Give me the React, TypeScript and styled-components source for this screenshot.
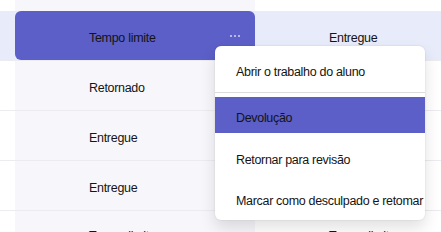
import React from "react";
import styled, { createGlobalStyle } from "styled-components";

const Global = createGlobalStyle`
  html, body { margin: 0; padding: 0; background: #ffffff; }
  body {
    width: 441px;
    height: 232px;
    overflow: hidden;
    font-family: "Liberation Sans", Arial, sans-serif;
  }
`;

const Page = styled.div`
  position: relative;
  width: 441px;
  height: 232px;
  overflow: hidden;
  background: #ffffff;
`;

const Table = styled.div`
  display: flex;
  flex-direction: column;
`;

const Row = styled.div<{ $h: number; $hover?: boolean; $line?: boolean }>`
  display: grid;
  grid-template-columns: 15px 240px 240px;
  height: ${(p) => p.$h}px;
  box-sizing: border-box;
  border-bottom: ${(p) => (p.$line ? "1px solid #ececf0" : "none")};
  background: ${(p) => (p.$hover ? "#e8ebfa" : "transparent")};
`;

type Tone = "plain" | "column" | "selected";

const Cell = styled.div<{ $tone: Tone; $pt?: number }>`
  display: flex;
  align-items: center;
  box-sizing: border-box;
  padding-top: ${(p) => p.$pt ?? 4}px;
  padding-left: 74px;
  font-size: 12.5px;
  letter-spacing: -0.3px;
  color: #141414;
  white-space: nowrap;
  background: ${(p) =>
    p.$tone === "selected" ? "#5b5fc7" : p.$tone === "column" ? "#f7f7fb" : "transparent"};
  border-radius: ${(p) => (p.$tone === "selected" ? "6px" : "0")};
`;

const Gutter = styled.div<{ $hover?: boolean }>`
  background: ${(p) => (p.$hover ? "#e8ebfa" : "#ffffff")};
`;

const MoreButton = styled.div`
  margin-left: auto;
  margin-right: 15px;
  margin-top: -4px;
  display: flex;
  gap: 2px;
  align-items: center;
`;

const Dot = styled.span`
  width: 2px;
  height: 2px;
  border-radius: 1px;
  background: #d3d5f4;
`;

const Menu = styled.div`
  position: absolute;
  left: 215px;
  top: 46px;
  width: 210px;
  height: 174px;
  box-sizing: border-box;
  background: #ffffff;
  border-radius: 6px;
  box-shadow: 0 0 2px rgba(0, 0, 0, 0.12), 0 8px 16px rgba(0, 0, 0, 0.12);
  display: flex;
  flex-direction: column;
  overflow: hidden;
`;

const MenuItem = styled.div<{ $h: number; $pt: number; $active?: boolean }>`
  display: flex;
  align-items: center;
  box-sizing: border-box;
  height: ${(p) => p.$h}px;
  padding-top: ${(p) => p.$pt}px;
  padding-left: 21px;
  font-size: 12.5px;
  letter-spacing: -0.32px;
  color: #141414;
  white-space: nowrap;
  background: ${(p) => (p.$active ? "#5b5fc7" : "transparent")};
`;

const Divider = styled.div`
  height: 1px;
  background: #dcdcdc;
  margin-bottom: 4px;
  flex: none;
`;

const More = () => (
  <MoreButton>
    <Dot />
    <Dot />
    <Dot />
  </MoreButton>
);

export default function App() {
  return (
    <Page>
      <Global />
      <Table>
        <Row $h={11}>
          <Gutter />
          <Cell $tone="column" />
          <Cell $tone="plain" />
        </Row>
        <Row $h={50} $hover $line>
          <Gutter $hover />
          <Cell $tone="selected">
            Tempo limite
            <More />
          </Cell>
          <Cell $tone="plain">Entregue</Cell>
        </Row>
        <Row $h={50} $line>
          <Gutter />
          <Cell $tone="column">Retornado</Cell>
          <Cell $tone="plain">Entregue</Cell>
        </Row>
        <Row $h={50} $line>
          <Gutter />
          <Cell $tone="column">Entregue</Cell>
          <Cell $tone="plain">Entregue</Cell>
        </Row>
        <Row $h={50} $line>
          <Gutter />
          <Cell $tone="column">Entregue</Cell>
          <Cell $tone="plain">Entregue</Cell>
        </Row>
        <Row $h={50}>
          <Gutter />
          <Cell $tone="column" $pt={0}>
            Tempo limite
          </Cell>
          <Cell $tone="plain" $pt={0}>
            Tempo limite
          </Cell>
        </Row>
      </Table>
      <Menu>
        <MenuItem $h={46} $pt={6}>
          Abrir o trabalho do aluno
        </MenuItem>
        <Divider />
        <MenuItem $h={36} $pt={5} $active>
          Devolução
        </MenuItem>
        <MenuItem $h={44} $pt={10}>
          Retornar para revisão
        </MenuItem>
        <MenuItem $h={43} $pt={4}>
          Marcar como desculpado e retomar
        </MenuItem>
      </Menu>
    </Page>
  );
}
